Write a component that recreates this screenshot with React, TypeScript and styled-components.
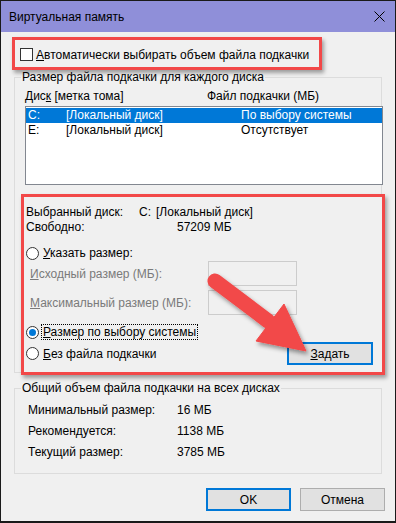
import styled, { createGlobalStyle } from 'styled-components'

const GlobalStyle = createGlobalStyle`
  body {
    margin: 0;
    font-family: 'Liberation Sans', Arial, sans-serif;
    font-size: 12px;
    color: #000;
  }
`

const Window = styled.div`
  position: relative;
  width: 396px;
  height: 523px;
  box-sizing: border-box;
  border: 1px solid #1a1a1a;
  border-bottom-width: 2px;
  background: #f0f0f0;
  display: flex;
  flex-direction: column;
  overflow: hidden;
`

const TitleBar = styled.div`
  height: 31px;
  flex: none;
  background: #8f8fd9;
  display: flex;
  align-items: center;
  justify-content: space-between;
  padding: 0 10px 0 8px;
`

const Title = styled.span`
  font-size: 12px;
`

const Body = styled.div`
  display: flex;
  flex-direction: column;
  padding: 0 13px;
`

const Highlight = styled.div`
  box-sizing: border-box;
  border: 3px solid #f24848;
  box-shadow: 2px 3px 4px rgba(0, 0, 0, 0.35);
`

const AutoHighlight = styled(Highlight)`
  margin: 5px 0 0 -2px;
  width: 310px;
  height: 33px;
  padding: 2px 0 0 5px;
  display: flex;
  align-items: center;
  gap: 3px;
`

const CheckBox = styled.span`
  width: 13px;
  height: 13px;
  box-sizing: border-box;
  border: 1px solid #333;
  background: #fff;
  flex: none;
`

const GroupBox = styled.fieldset<{ $top?: number; $bottom?: number }>`
  margin: ${(p) => p.$top ?? 0}px 0 0;
  min-width: 0;
  padding: 0 0 ${(p) => p.$bottom ?? 0}px 6px;
  border: 1px solid #dcdcdc;
`

const GroupTitle = styled.legend`
  padding: 0 1px;
  line-height: 14px;
`

const GroupContent = styled.div`
  display: flex;
  flex-direction: column;
  padding-left: 4px;
`

const ColumnHeaders = styled.div`
  display: flex;
  margin-top: 5px;
  line-height: 14px;
`

const Cell = styled.span<{ $width?: number }>`
  width: ${(p) => (p.$width ? `${p.$width}px` : 'auto')};
  flex: none;
  white-space: nowrap;
`

const ListBox = styled.div`
  margin: 3px -2px 0 0;
  height: 79px;
  box-sizing: border-box;
  border: 1px solid #828790;
  background: #fff;
  padding-top: 1px;
`

const ListRow = styled.div<{ $selected?: boolean }>`
  display: flex;
  height: 15px;
  line-height: 15px;
  padding-left: 2px;
  background: ${(p) => (p.$selected ? '#0078d7' : 'transparent')};
  color: ${(p) => (p.$selected ? '#fff' : '#000')};
`

const DiskHighlight = styled(Highlight)`
  margin: 9px -4px -3px -4px;
  padding: 8px 9px 7px 2px;
  display: flex;
  flex-direction: column;
  background: #f0f0f0;
`

const InfoRow = styled.div`
  display: flex;
  line-height: 15px;
  white-space: nowrap;
`

const InfoValue = styled.span<{ $indent?: number }>`
  margin-left: ${(p) => p.$indent ?? 0}px;
`

const RadioRow = styled.div<{ $top: number }>`
  display: flex;
  align-items: center;
  margin-top: ${(p) => p.$top}px;
  min-height: 16px;
`

const RadioCircle = styled.span<{ $checked?: boolean }>`
  width: 13px;
  height: 13px;
  box-sizing: border-box;
  border-radius: 50%;
  border: 1px solid #333;
  background: #fff;
  flex: none;
  display: inline-flex;
  align-items: center;
  justify-content: center;

  &::after {
    content: '';
    width: 7px;
    height: 7px;
    border-radius: 50%;
    background: ${(p) => (p.$checked ? '#0078d7' : 'transparent')};
  }
`

const RadioText = styled.span<{ $focused?: boolean }>`
  margin-left: 2px;
  padding: 0 1px;
  line-height: 14px;
  border: 1px dotted ${(p) => (p.$focused ? '#000' : 'transparent')};
  white-space: nowrap;
`

const FieldRow = styled.div<{ $top: number }>`
  display: flex;
  align-items: center;
  margin-top: ${(p) => p.$top}px;
`

const FieldLabel = styled.span`
  width: 182px;
  box-sizing: border-box;
  padding-left: 4px;
  color: #7a7a7a;
  white-space: nowrap;
`

const SizeInput = styled.input`
  width: 89px;
  height: 25px;
  box-sizing: border-box;
  margin: 0;
  border: 1px solid #cccccc;
  background: #f0f0f0;
`

const Button = styled.button<{ $primary?: boolean; $width?: number }>`
  width: ${(p) => p.$width ?? 85}px;
  height: 23px;
  box-sizing: border-box;
  margin: 0;
  padding: 0;
  font: inherit;
  color: #000;
  background: #e1e1e1;
  border: ${(p) => (p.$primary ? '2px solid #0078d7' : '1px solid #adadad')};
`

const SetButton = styled(Button)`
  margin-left: auto;
`

const TotalsRows = styled.div`
  display: flex;
  flex-direction: column;
  padding: 5px 0 0 7px;
`

const TotalsRow = styled.div`
  display: flex;
  line-height: 21px;
`

const Footer = styled.div`
  display: flex;
  justify-content: flex-end;
  gap: 9px;
  margin: 14px -3px 0 0;
`

const Arrow = styled.svg`
  position: absolute;
  left: -1px;
  top: -1px;
  pointer-events: none;
`

const CloseIcon = () => (
  <svg width='11' height='11' viewBox='0 0 11 11'>
    <path d='M0.5 0.5 L10.5 10.5 M10.5 0.5 L0.5 10.5' stroke='#000' strokeWidth='1' />
  </svg>
)

export default function App() {
  return (
    <>
      <GlobalStyle />
      <Window>
        <TitleBar>
          <Title>Виртуальная память</Title>
          <CloseIcon />
        </TitleBar>

        <Body>
          <AutoHighlight>
            <CheckBox />
            <span>
              <u>А</u>втоматически выбирать объем файла подкачки
            </span>
          </AutoHighlight>

          <GroupBox>
            <GroupTitle>Размер файла подкачки для каждого диска</GroupTitle>
            <GroupContent>
              <ColumnHeaders>
                <Cell $width={182}>
                  Дис<u>к</u> [метка тома]
                </Cell>
                <Cell>Файл подкачки (МБ)</Cell>
              </ColumnHeaders>

              <ListBox>
                <ListRow $selected>
                  <Cell $width={38}>C:</Cell>
                  <Cell $width={175}>[Локальный диск]</Cell>
                  <Cell>По выбору системы</Cell>
                </ListRow>
                <ListRow>
                  <Cell $width={38}>E:</Cell>
                  <Cell $width={175}>[Локальный диск]</Cell>
                  <Cell>Отсутствует</Cell>
                </ListRow>
              </ListBox>

              <DiskHighlight>
                <InfoRow>
                  <Cell $width={113}>Выбранный диск:</Cell>
                  <Cell $width={17}>C:</Cell>
                  <span>[Локальный диск]</span>
                </InfoRow>
                <InfoRow>
                  <Cell $width={113}>Свободно:</Cell>
                  <InfoValue $indent={38}>57209 МБ</InfoValue>
                </InfoRow>

                <RadioRow $top={10}>
                  <RadioCircle />
                  <RadioText>
                    <u>У</u>казать размер:
                  </RadioText>
                </RadioRow>
                <FieldRow $top={0}>
                  <FieldLabel>
                    <u>И</u>сходный размер (МБ):
                  </FieldLabel>
                  <SizeInput disabled />
                </FieldRow>
                <FieldRow $top={4}>
                  <FieldLabel>
                    <u>М</u>аксимальный размер (МБ):
                  </FieldLabel>
                  <SizeInput disabled />
                </FieldRow>

                <RadioRow $top={9}>
                  <RadioCircle $checked />
                  <RadioText $focused>
                    <u>Р</u>азмер по выбору системы
                  </RadioText>
                </RadioRow>
                <RadioRow $top={2}>
                  <RadioCircle />
                  <RadioText>
                    <u>Б</u>ез файла подкачки
                  </RadioText>
                  <SetButton $primary $width={86}>
                    <u>З</u>адать
                  </SetButton>
                </RadioRow>
              </DiskHighlight>
            </GroupContent>
          </GroupBox>

          <GroupBox $top={8} $bottom={10}>
            <GroupTitle>Общий объем файла подкачки на всех дисках</GroupTitle>
            <TotalsRows>
              <TotalsRow>
                <Cell $width={149}>Минимальный размер:</Cell>
                <span>16 МБ</span>
              </TotalsRow>
              <TotalsRow>
                <Cell $width={149}>Рекомендуется:</Cell>
                <span>1138 МБ</span>
              </TotalsRow>
              <TotalsRow>
                <Cell $width={149}>Текущий размер:</Cell>
                <span>3785 МБ</span>
              </TotalsRow>
            </TotalsRows>
          </GroupBox>

          <Footer>
            <Button $primary>OK</Button>
            <Button>Отмена</Button>
          </Footer>
        </Body>

        <Arrow width='396' height='523' viewBox='0 0 396 523'>
          <defs>
            <filter id='arrowShadow' x='-20%' y='-20%' width='140%' height='140%'>
              <feDropShadow dx='2' dy='3' stdDeviation='2' floodColor='#000' floodOpacity='0.4' />
            </filter>
          </defs>
          <g filter='url(#arrowShadow)' fill='#f24848' stroke='#f24848'>
            <line x1='215' y1='281' x2='268' y2='321' strokeWidth='15' strokeLinecap='round' />
            <polygon points='256,341 284,304 306,351' strokeWidth='1' strokeLinejoin='round' />
          </g>
        </Arrow>
      </Window>
    </>
  )
}
